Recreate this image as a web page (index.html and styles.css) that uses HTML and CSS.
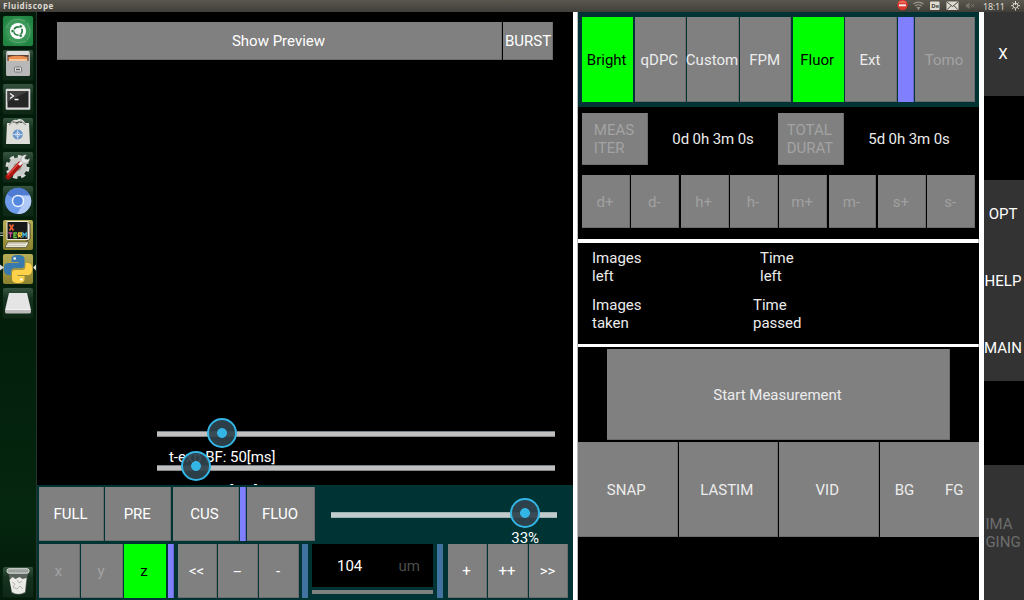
FILE: index.html
```html
<!DOCTYPE html>
<html lang="en">
<head>
<meta charset="utf-8">
<title>Fluidiscope</title>
<link rel="stylesheet" href="styles.css">
</head>
<body>
<header class="topbar">
  <span class="title">Fluidiscope</span>
  <svg class="tray" width="128" height="12" viewBox="896 0 128 12">
    <circle cx="902.5" cy="5" r="5.2" fill="#d9372c"/><path d="M898 3a5 4 0 0 1 9 0" fill="#e8685b"/><path d="M899 4.3h7v2h-7z" fill="#f3e8e4"/>
    <g fill="none" stroke="#9a978c" stroke-width="1.1"><path d="M913.5 4q5-3.7 10 0M915.2 6q3.3-2.4 6.600 0M916.8 8q1.700-1.200 3.400 0"/></g><circle cx="918.500" cy="9" r=".8" fill="#b8b5aa"/>
    <rect x="930" y="1.500" width="9.500" height="8.500" rx=".8" fill="#dfdbd2"/>
    <text class="lang" x="931.200" y="8.300">De</text>
    <rect x="946.500" y="1.500" width="12" height="8.500" rx=".5" fill="#dfdbd2"/><path d="M947 2l5.500 4.500 5.500-4.500M947 9.700l4-4M958 9.700l-4-4" fill="none" stroke="#4a4842" stroke-width="1"/>
    <path d="M966 4.300h1.500l2-2v7l-2-2H966z" fill="#77746a"/><path d="M971 4l3.300 3.300M974.300 4L971 7.300" stroke="#77746a" stroke-width="1"/>
    <text class="clock" x="983" y="9.700" textLength="22">18:11</text>
    <g fill="none" stroke="#dfdbd2"><circle cx="1015.500" cy="5.700" r="2.400" stroke-width="1"/><path stroke-width="1" d="M1015.500 1v4M1015.500 8.500v2M1011 5.700h2M1018 5.700h2M1012.300 2.500l1.300 1.300M1018.700 2.500l-1.300 1.300M1012.300 8.900l1.300-1.300M1018.700 8.900l-1.300-1.300"/></g>
  </svg>
</header>
<div class="desktop">
  <nav class="launcher">
    <svg class="tile dash" viewBox="0 0 30 30"><path d="M3 12Q9-1 22 5M6 23q7 6 17 2M24 7q6 9 0 17" fill="none" stroke="#60aa77" stroke-width="1"/><circle cx="15" cy="15" r="8" fill="#fff"/><circle cx="15" cy="15" r="4.200" fill="none" stroke="#237b42" stroke-width="1.700" stroke-dasharray="7.300 1.500" stroke-dashoffset="3"/><g fill="#237b42" stroke="#fff" stroke-width=".5"><circle cx="9.600" cy="15" r="1.600"/><circle cx="17.700" cy="10.300" r="1.600"/><circle cx="17.700" cy="19.700" r="1.600"/></g></svg>
    <svg class="tile" viewBox="0 0 30 30"><rect x="3" y="1" width="24" height="25" rx="2" fill="#b7b7b7"/><path d="M4 1h22l-1 5H5z" fill="#ddd"/><rect x="4.500" y="5" width="21" height="7" fill="#594037"/><path d="M5.500 7q8-2.500 19 0v5h-19z" fill="#e98d51"/><path d="M6 9h18v3H6z" fill="#f8c59a"/><path d="M3 11h24v13q0 2-2 2H5q-2 0-2-2z" fill="#b8b8b8"/><rect x="11.500" y="17" width="7" height="5" rx="1" fill="#e4e4e4" stroke="#777"/><path d="M13 19.500h4" stroke="#555" stroke-width="1.500"/></svg>
    <svg class="tile" viewBox="0 0 30 30"><rect x="2.700" y="4.700" width="24.600" height="21" rx="1" fill="#dadada"/><rect x="4.500" y="7" width="21" height="16.500" fill="#262626"/><path d="M4.500 7h21l-21 11z" fill="#414141"/><path d="M7 9.500l3.500 2.500L7 14.500M11.500 15.500h4" fill="none" stroke="#f4f4f4" stroke-width="1.300"/></svg>
    <svg class="tile" viewBox="0 0 30 30"><path d="M4 5h22l1 21H3z" fill="#deded9"/><path d="M8 7q1-5 6-4 5-3 8 4" fill="none" stroke="#deded9" stroke-width="2"/><path d="M6 7l4-4 4 3 4-3 5 4" stroke="#999" stroke-width="1.200" fill="none"/><circle cx="14.700" cy="16.500" r="5" fill="#6593ca"/><path d="M14.700 12v9M10.200 16.500h9" stroke="#d6e1ef" stroke-width="1"/><circle cx="14.700" cy="16.500" r="2.200" fill="none" stroke="#b7cce5"/></svg>
    <svg class="tile" viewBox="0 0 30 30"><circle cx="14.500" cy="15" r="9.500" fill="#c9cbc9"/><circle cx="14.500" cy="15" r="10.500" fill="none" stroke="#d7d9d7" stroke-width="3" stroke-dasharray="4.500 3.750"/><circle cx="14.500" cy="15" r="4" fill="#9b9e9b"/><path d="M5 25L17 12" stroke="#aa1510" stroke-width="5" stroke-linecap="round"/><path d="M4.500 23.500L15 12" stroke="#e44a3f" stroke-width="1.500"/><path d="M16 13l5-5" stroke="#eee" stroke-width="3"/><path d="M23.500 3a4.200 4.200 0 1 0 3 3.500l-3 1.500-2-2z" fill="#e6e6e6" stroke="#888" stroke-width=".5"/></svg>
    <svg class="tile" viewBox="0 0 30 30"><circle cx="15" cy="15" r="13" fill="#6f9cea"/><path d="M15 15L3.800 8.300A13 13 0 0 1 27 9.500H15z" fill="#4f7bd2"/><path d="M15 15l5 3-6 10A13 13 0 0 0 27 9.500H16z" fill="#afc8f5"/><circle cx="15" cy="15" r="6.200" fill="#eef4fd"/><circle cx="15" cy="15" r="4.800" fill="#5487df"/></svg>
    <svg class="tile active" viewBox="0 0 30 30"><path d="M24 2l3 2v15l-3 2z" fill="#f4f1e5" stroke="#222" stroke-width=".7"/><rect x="3.500" y="1" width="22" height="19" rx="1" fill="#eee9d8"/><rect x="4.500" y="2" width="20" height="17" fill="#191919"/><path d="M6.500 4.500l4 6M10.500 4.500l-4 6" stroke="#ed6332" stroke-width="1.700"/><g fill="none" stroke-width="1.300"><path d="M5.500 13h4M7.500 13v4.500" stroke="#d8489d"/><path d="M14 13h-3v4.500h3M11 15.200h2.500" stroke="#6ccf45"/><path d="M15.500 17.500V13h3v2.200h-3l3 2.300" stroke="#e1c13c"/><path d="M20 17.500V13l1.600 2 1.600-2v4.500" stroke="#46b8df"/></g><path d="M5 22h21l-3 5.500H2z" fill="#f0eddf" stroke="#393629" stroke-width=".6"/><path d="M5.500 23.700h18M4.500 25.600h18" stroke="#a19b80" stroke-dasharray="1 1"/></svg>
    <svg class="tile active" viewBox="0 0 30 30"><path d="M14.700 1C9 1 8.500 3.500 8.500 5v3h7v1H5C2 9 .800 12 .800 15.300S2.500 21 5 21h3v-3.500q0-3.500 4-3.500h6.500q3 0 3-3V5c0-2.500-2-4-6.800-4z" fill="#3979ae"/><path d="M15.300 29c5.700 0 6.200-2.500 6.200-4v-3h-7v-1H25c3 0 4.200-3 4.200-6.300S27.500 9 25 9h-2.500v3.500q0 3.500-4 3.500H12q-3 0-3 3v6c0 2.500 1.500 4 6.300 4z" fill="#ffd24a"/><circle cx="11.700" cy="4.500" r="1.300" fill="#fff"/><circle cx="18.300" cy="25.500" r="1.300" fill="#fff"/></svg>
    <svg class="tile" viewBox="0 0 30 30"><path d="M6 5h18l4 17H2z" fill="#e5e5e5"/><path d="M2 21h26v3q0 1.500-2 1.500H4q-2 0-2-1.500z" fill="#bcbcbc"/><path d="M3 21.500h24" stroke="#fff" stroke-width=".8"/></svg>
    <svg class="tile trash" viewBox="0 0 30 30"><path d="M5.500 5h19.500l-2.500 21q-7 3-14 0z" fill="#59635c"/><path d="M6.500 13l3-3 3 2 4-2 3 2 4-1-1.500 14q-7 4-13 0z" fill="#eaeae6"/><path d="M9 15l3 2-2 3 4 2 3-3 3 3M14 13l2 3 3-2" fill="none" stroke="#b5b5b0" stroke-width="1"/><rect x="4" y="1.700" width="22" height="4.500" rx="2" fill="#9ca29d" stroke="#dce0dd" stroke-width="1"/></svg>
    <svg class="pips" viewBox="0 0 37 60"><path d="M0 13h3M0 15.500h3M0 45l3.500 2.500L0 50z" stroke="#ddd" stroke-width=".8" fill="#ddd"/><path d="M36 44.500v6L33 47.500z" fill="#ddd"/></svg>
  </nav>
  <main class="camera">
    <section class="preview">
      <div class="preview-buttons"><button>Show Preview</button><button>BURST</button></div>
      <div class="exposure">
        <div class="slider"><i class="thumb first"></i></div>
        <div class="slider-label">t-exp BF: 50[ms]</div>
        <div class="slider"><i class="thumb second"></i></div>
        <div class="slider-label fluo-label">t-exp Fluo: 50[ms]</div>
      </div>
    </section>
    <section class="controls">
      <div class="modes">
        <button>FULL</button><button>PRE</button><button>CUS</button><i class="bar"></i><button>FLUO</button>
        <div class="light"><div class="slider"><i class="thumb third"></i></div><div class="percent">33%</div></div>
      </div>
      <div class="motors">
        <button class="off">x</button><button class="off">y</button><button class="on">z</button><i class="bar"></i>
        <button>&lt;&lt;</button><button class="dashes">--</button><button>-</button><i class="bar blue"></i>
        <div class="distance"><div class="readout"><span>104</span><span class="unit">um</span></div><i class="rule"></i></div>
        <i class="bar blue"></i><button>+</button><button>++</button><button>&gt;&gt;</button>
      </div>
    </section>
  </main>
  <section class="panel">
    <div class="imaging">
      <button class="on">Bright</button><button>qDPC</button><button>Custom</button><button>FPM</button><button class="on">Fluor</button><button>Ext</button><i class="bar"></i><button class="off">Tomo</button>
    </div>
    <div class="timing">
      <div class="durations"><button class="off"><span>MEAS<br>ITER</span></button><span class="time">0d 0h 3m 0s</span><button class="off"><span>TOTAL<br>DURAT</span></button><span class="time">5d 0h 3m 0s</span></div>
      <div class="steps"><button>d+</button><button>d-</button><button>h+</button><button>h-</button><button>m+</button><button>m-</button><button>s+</button><button>s-</button></div>
    </div>
    <div class="status"><p>Images<br>left</p><p class="time-left">Time<br>left</p><p>Images<br>taken</p><p>Time<br>passed</p></div>
    <div class="capture">
      <button class="start">Start Measurement</button>
      <div class="shots"><button>SNAP</button><button>LASTIM</button><button>VID</button><div class="pair"><button>BG</button><button>FG</button></div></div>
    </div>
  </section>
  <aside class="sidebar">
    <button class="exit">X</button>
    <div class="menu"><button>OPT</button><button>HELP</button><button>MAIN</button></div>
    <button class="current"><span>IMA<br>GING</span></button>
  </aside>
</div>
</body>
</html>
```

FILE: styles.css
```css
* { box-sizing: border-box; }
body { margin: 0; width: 1024px; height: 600px; overflow: hidden; background: #000; color: #fff; font: 15px/18px Roboto, sans-serif; }
button { display: flex; align-items: center; justify-content: center; min-width: 0; margin: 0; padding: 0 2px 0 0; border: 0; background: #808080; color: #fff; font: inherit; white-space: nowrap; box-shadow: inset -1px -1px 0 #6c6c6c; }
.off, .steps button { color: #a3a3a3; }
.off span { text-align: left; }
.on { background: #0f0; color: #000; box-shadow: none; }
.bar { background: #8080ff; box-shadow: inset -1px 0 0 #6868d0; }
.blue { background: #40739f; box-shadow: none; }

.topbar { height: 12px; display: flex; justify-content: space-between; background: linear-gradient(#5a584e, #403f3a); }
.title { padding-left: 3px; font: bold 8px/12px "Noto Sans", sans-serif; color: #dfdbd2; letter-spacing: .55px; }
.tray { display: block; }
.lang { font: bold 6px "Noto Sans", sans-serif; fill: #45433d; }
.clock { font: 9px "Noto Sans", sans-serif; fill: #dfdbd2; }

.desktop { height: 588px; display: grid; grid-template-columns: 37px 536px 411px 40px; }
.launcher { position: relative; display: flex; flex-direction: column; gap: 4px; padding: 4px 3px 3px; background: linear-gradient(#031a0a, #03200c 60%, #05260f 85%, #041b0a); border-right: 1px solid #24362a; }
.tile { flex: none; width: 30px; height: 30px; border-radius: 2px; background: linear-gradient(#36543f, #173320 35%, #0e2716); box-shadow: 0 0 1px #2c4634; }
.dash { background: radial-gradient(circle, #64b77e, #218542 75%); }
.active { background: linear-gradient(#b8ad57, #8b812e); }
.trash { margin-top: auto; }
.pips { position: absolute; left: 0; top: 208px; width: 37px; height: 60px; }

.camera { display: grid; grid-template-rows: 473px 115px; min-width: 0; }
.preview { display: flex; flex-direction: column; justify-content: space-between; padding: 10px 0 0 20px; overflow: hidden; }
.preview-buttons { display: grid; grid-template-columns: 445px 50px; gap: 1px; height: 38px; }
.preview-buttons button:last-child { padding: 0; }
.exposure { height: 55px; margin-left: 100px; width: 398px; padding-top: 1px; }
.slider { position: relative; height: 6px; background: #c0c0c0; border-top: 1px solid #77868a; border-bottom: 1px solid #888; }
.thumb { position: absolute; width: 30px; height: 30px; border: 2px solid #33b5e5; border-radius: 50%; background: radial-gradient(circle, #33b5e5 0 4.5px, transparent 5.3px), rgba(47, 67, 77, .93); }
.first { left: 50px; top: -14px; }
.second { left: 24px; top: -15px; }
.third { left: 179px; top: -15px; }
.slider-label { height: 28px; padding: 11px 0 0 12px; letter-spacing: -.05px; }
.fluo-label { width: 101px; padding: 11px 0 0; display: flex; justify-content: flex-end; white-space: nowrap; }

.controls { background: #033; padding: 2px; }
.modes { display: grid; grid-template-columns: 65px 66px 66px 6px 68px 1fr; grid-template-rows: 54px; column-gap: 1.25px; height: 54px; }
.light { padding: 25px 14px 0 15px; }
.light .slider { background: #c0cccc; border-color: #9fb0b0; }
.percent { padding: 11px 0 0 180px; }
.motors { display: grid; grid-template-columns: 41px 42px 42px 6px 39px 40px 40px 6px 121px 6px 39px 40px 39px; column-gap: 1px; height: 54px; margin-top: 3px; }
.motors .bar:nth-child(4) { margin: 0 -1px 0 1px; }
.motors button:nth-child(n+5):nth-child(-n+7) { margin: 0 -4px 0 4px; }
.motors .dashes { letter-spacing: -.6px; }
.motors .blue:nth-child(8) { margin: 0 -6px 0 6px; }
.distance { margin: 0 -9px 0 9px; display: flex; flex-direction: column; gap: 3px; }
.readout { height: 43px; background: #000; display: flex; justify-content: space-between; align-items: center; padding: 0 13px 0 25px; }
.unit { color: #4d4d4d; }
.rule { height: 4px; background: #808080; }
.motors .blue:nth-child(10) { margin: 0 -12px 0 12px; }
.motors button:nth-child(n+11) { margin: 0 -16px 0 16px; }

.panel { display: grid; grid-template-rows: 95px 132px 4px 101px 3px 253px; border-left: 4px solid #fff; border-right: 5px solid #fff; background: #fff; box-shadow: inset 1px 0 #bbb, inset -1px 0 #bbb; padding-left: 1px; color: #ececec; }
.panel button:not(.on):not(.off) { color: #ececec; }
.panel .steps button:nth-child(n) { color: #a0a0a0; }
.imaging { background: #033; padding: 5px 4px; display: grid; grid-template-columns: repeat(6, 51.4px) 16px 60px; column-gap: 1.25px; }
.timing { background: #000; padding: 6px 4px 0; }
.durations { height: 52px; display: grid; grid-template-columns: 66px 130px 66px 130px; align-items: stretch; }
.time { display: flex; align-items: center; justify-content: center; letter-spacing: -.1px; }
.steps { display: grid; grid-template-columns: repeat(8, 1fr); gap: 1.4px; height: 53px; margin-top: 10px; }
.status { grid-row: 4; background: #000; display: grid; grid-template-columns: 161px 1fr; grid-template-rows: 47px 47px; padding: 6px 14px; }
.status p { margin: 0; }
.status .time-left { padding-left: 7px; }
.capture { grid-row: 6; background: #000; padding-top: 2px; }
.start { height: 91px; width: 343px; margin-left: 29px; }
.shots { height: 95px; margin-top: 2px; display: grid; grid-template-columns: repeat(4, 1fr); gap: 1px; }
.shots > button { padding-right: 3px; }
.pair { display: grid; grid-template-columns: 1fr 1fr; }
.pair button { box-shadow: none; padding: 0; }

.sidebar { display: flex; flex-direction: column; justify-content: space-between; background: #000; }
.sidebar button { background: #333; box-shadow: none; }
.exit { height: 84px; }
.menu { display: grid; grid-template-rows: repeat(3, 67px); }
.sidebar .current { height: 135px; color: #6d6d6d; }
.current span { text-align: left; }
```
